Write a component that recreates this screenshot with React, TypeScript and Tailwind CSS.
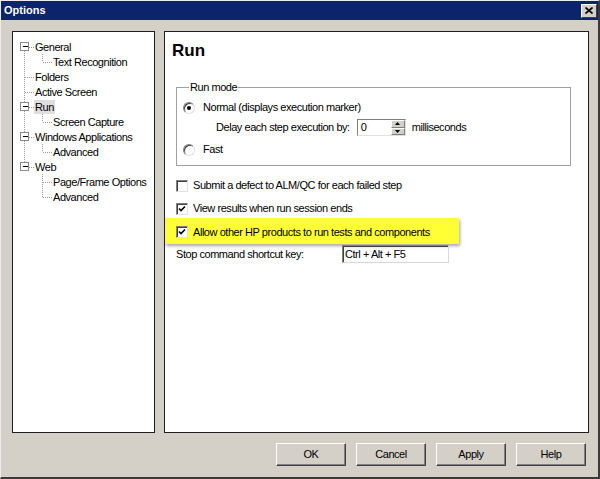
import React from 'react';

// Options dialog (classic Windows look), page "Run"

type TreeRow = { label: string; level: 0 | 1; box?: boolean; selected?: boolean };

const TREE: TreeRow[] = [
  { label: 'General', level: 0, box: true },
  { label: 'Text Recognition', level: 1 },
  { label: 'Folders', level: 0 },
  { label: 'Active Screen', level: 0 },
  { label: 'Run', level: 0, box: true, selected: true },
  { label: 'Screen Capture', level: 1 },
  { label: 'Windows Applications', level: 0, box: true },
  { label: 'Advanced', level: 1 },
  { label: 'Web', level: 0, box: true },
  { label: 'Page/Frame Options', level: 1 },
  { label: 'Advanced', level: 1 },
];

const ROW_H = 15;
const TOP = 7;
const mid = (i: number) => TOP + ROW_H * i + 7.5;

const TreeLines: React.FC = () => {
  const dots = { stroke: '#9a9a9a', strokeWidth: 1, strokeDasharray: '1 1', shapeRendering: 'crispEdges' as const };
  // groupes d'enfants : [ligne parent, dernière ligne enfant]
  const groups: [number, number][] = [
    [0, 1],
    [4, 5],
    [6, 7],
    [8, 10],
  ];
  return (
    <svg className="absolute inset-0 pointer-events-none" width="141" height="400">
      <line x1="11.5" y1={mid(0)} x2="11.5" y2={mid(8)} {...dots} />
      {TREE.map((r, i) =>
        r.level === 0 ? (
          <line key={i} x1="12" y1={mid(i) + 0.5} x2="21" y2={mid(i) + 0.5} {...dots} />
        ) : (
          <line key={i} x1="30" y1={mid(i) + 0.5} x2="39" y2={mid(i) + 0.5} {...dots} />
        )
      )}
      {groups.map(([p, last]) => (
        <line key={p} x1="29.5" y1={TOP + ROW_H * (p + 1)} x2="29.5" y2={mid(last)} {...dots} />
      ))}
      {TREE.map((r, i) =>
        r.box ? (
          <g key={'b' + i} shapeRendering="crispEdges">
            <rect x="7.5" y={mid(i) - 4} width="8" height="8" fill="#fff" stroke="#8a8a8a" />
            <line x1="9.5" y1={mid(i)} x2="14.5" y2={mid(i)} stroke="#000" />
          </g>
        ) : null
      )}
    </svg>
  );
};

const Radio: React.FC<{ checked?: boolean }> = ({ checked }) => (
  <span className="w-[12px] h-[12px] rounded-full bg-white border border-[#808080] border-r-[#e0e0e0] border-b-[#e0e0e0] shadow-[inset_1px_1px_#404040] flex items-center justify-center shrink-0">
    {checked && <span className="w-[4px] h-[4px] rounded-full bg-black" />}
  </span>
);

const Check: React.FC<{ checked?: boolean }> = ({ checked }) => (
  <span className="w-[12px] h-[12px] bg-white border border-[#808080] border-r-[#e0e0e0] border-b-[#e0e0e0] shadow-[inset_1px_1px_#404040] flex items-center justify-center shrink-0">
    {checked && (
      <svg width="8" height="8" viewBox="0 0 8 8">
        <path d="M1 3.5 L3 5.5 L7 1.5" stroke="#000" strokeWidth="1.6" fill="none" />
      </svg>
    )}
  </span>
);

const Btn: React.FC<{ children: React.ReactNode }> = ({ children }) => (
  <button className="w-[70px] h-[23px] bg-[#d4d0c8] border border-t-white border-l-white border-r-[#404040] border-b-[#404040] shadow-[inset_-1px_-1px_#808080] flex items-center justify-center">
    {children}
  </button>
);

export default function App() {
  return (
    <div className="w-[600px] h-[479px] bg-[#d4d0c8] border-t border-l border-t-[#ecebe6] border-l-[#ecebe6] border-r-2 border-b-2 border-r-[#3a3a3a] border-b-[#3a3a3a] flex flex-col font-['Liberation_Sans',Arial,sans-serif] text-[11px] leading-[13px] tracking-[-0.45px] text-black overflow-hidden">
      {/* barre de titre */}
      <div className="h-[19px] bg-[#0c246b] flex items-center justify-between pl-[3px] pr-[1px]">
        <span className="text-white font-bold tracking-normal">Options</span>
        <span className="w-[16px] h-[14px] bg-[#d4d0c8] border border-t-white border-l-white border-r-[#404040] border-b-[#404040] flex items-center justify-center">
          <svg width="8" height="7" viewBox="0 0 8 7">
            <path d="M0.5 0.5 L7.5 6.5 M7.5 0.5 L0.5 6.5" stroke="#000" strokeWidth="1.6" />
          </svg>
        </span>
      </div>

      <div className="flex-1 flex flex-col pt-[11px] pl-[11px] pr-[9px]">
        <div className="flex gap-[9px] h-[402px]">
          {/* arbre */}
          <div className="w-[143px] bg-white border border-[#1e1e1e] relative">
            <TreeLines />
            <div className="relative pt-[7px]">
              {TREE.map((r, i) => (
                <div
                  key={i}
                  className={`h-[15px] flex items-center ${r.level === 0 ? 'pl-[21px]' : 'pl-[39px]'}`}
                >
                  <span className={`px-[1px] leading-[14px] ${r.selected ? 'bg-[#dedede]' : ''}`}>{r.label}</span>
                </div>
              ))}
            </div>
          </div>

          {/* page Run */}
          <div className="flex-1 bg-white border border-[#1e1e1e] pl-[11px]">
            <div className="-ml-[4px] mt-[9px] text-[17px] leading-[20px] font-bold tracking-normal">Run</div>

            <fieldset className="mt-[20px] w-[395px] border border-[#a0a0a0] px-[6px] pb-[8px]">
              <legend className="ml-[6px] px-[1px] leading-[13px]">Run mode</legend>
              <div className="mt-[6px] h-[15px] flex items-center gap-[8px]">
                <Radio checked />
                <span>Normal (displays execution marker)</span>
              </div>
              <div className="mt-[4px] h-[17px] flex items-center pl-[33px]">
                <span>Delay each step execution by:</span>
                <div className="ml-[7px] flex h-[17px] border border-[#808080] border-r-[#e0e0e0] border-b-[#e0e0e0] shadow-[inset_1px_1px_#404040]">
                  <span className="w-[33px] pl-[3px] flex items-center bg-white">0</span>
                  <div className="w-[14px] flex flex-col">
                    <span className="flex-1 bg-[#d4d0c8] border border-t-white border-l-white border-r-[#808080] border-b-[#808080] flex items-center justify-center">
                      <svg width="5" height="3" viewBox="0 0 5 3"><path d="M0 3 L2.5 0 L5 3 Z" fill="#000" /></svg>
                    </span>
                    <span className="flex-1 bg-[#d4d0c8] border border-t-white border-l-white border-r-[#808080] border-b-[#808080] flex items-center justify-center">
                      <svg width="5" height="3" viewBox="0 0 5 3"><path d="M0 0 L2.5 3 L5 0 Z" fill="#000" /></svg>
                    </span>
                  </div>
                </div>
                <span className="ml-[6px]">milliseconds</span>
              </div>
              <div className="mt-[6px] h-[15px] flex items-center gap-[8px]">
                <Radio />
                <span>Fast</span>
              </div>
            </fieldset>

            <div className="mt-[12px] h-[15px] flex items-center gap-[5px]">
              <Check />
              <span>Submit a defect to ALM/QC for each failed step</span>
            </div>
            <div className="mt-[8px] h-[15px] flex items-center gap-[5px]">
              <Check checked />
              <span>View results when run session ends</span>
            </div>
            <div className="mt-[2px] -ml-[11px] pl-[11px] pt-[2px] w-[294px] h-[26px] bg-[#ffff33] shadow-[1px_2px_3px_rgba(0,0,0,0.35)] flex items-center gap-[5px]">
              <Check checked />
              <span>Allow other HP products to run tests and components</span>
            </div>
            <div className="mt-[1px] h-[18px] flex items-center">
              <span className="w-[166px]">Stop command shortcut key:</span>
              <span className="w-[107px] h-[18px] pl-[2px] flex items-center border border-[#808080] border-r-[#d8d8d8] border-b-[#d8d8d8] shadow-[inset_1px_1px_#404040]">
                Ctrl + Alt + F5
              </span>
            </div>
          </div>
        </div>

        <div className="mt-[10px] flex justify-end gap-[10px] pr-[3px]">
          <Btn>OK</Btn>
          <Btn>Cancel</Btn>
          <Btn>Apply</Btn>
          <Btn>Help</Btn>
        </div>
      </div>
    </div>
  );
}
